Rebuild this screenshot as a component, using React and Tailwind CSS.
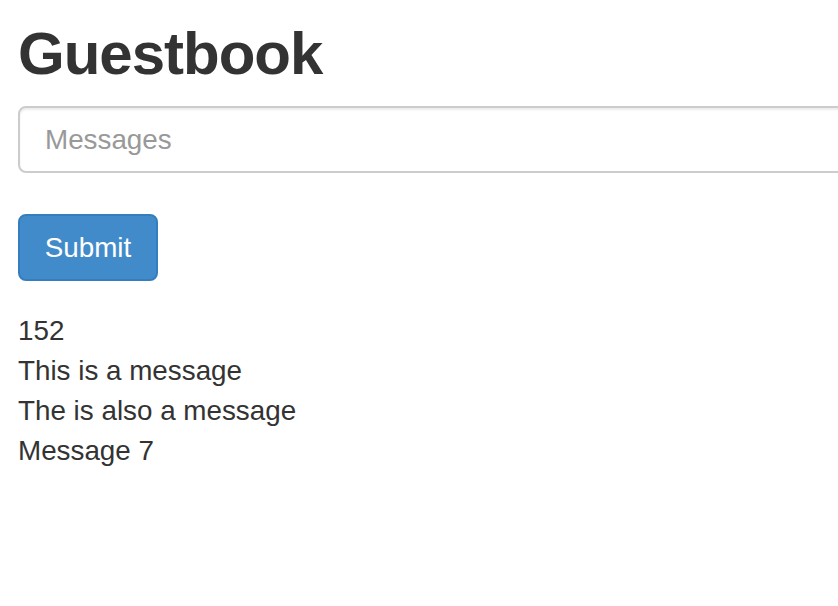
import React, { useState } from "react";

const App = () => {
  const [message, setMessage] = useState("");
  const messages = ["152", "This is a message", "The is also a message", "Message 7"];

  return (
    <div className="w-full min-h-[606px] overflow-hidden bg-white text-[#333] font-['Liberation_Sans',Arial,sans-serif]">
      <div className="pl-[18px] pt-[24px]">
        <h1 className="text-[60px] leading-[60px] font-bold tracking-[-1px] text-[#333]">Guestbook</h1>

        {/* Message form */}
        <form className="mt-[22px]" onSubmit={(e) => e.preventDefault()}>
          <input
            type="text"
            value={message}
            onChange={(e) => setMessage(e.target.value)}
            placeholder="Messages"
            className="block w-[860px] h-[67px] px-[25px] text-[27.8px] border-2 border-[#ccc] rounded-[8px] shadow-[inset_0_2px_2px_rgba(0,0,0,0.075)] placeholder-[#999] outline-none"
          />
          <button
            type="submit"
            className="mt-[41px] w-[140px] h-[67px] flex items-center justify-center text-[27.8px] text-white bg-[#428bca] border-2 border-[#357ebd] rounded-[8px]"
          >
            Submit
          </button>
        </form>

        {/* Messages list */}
        <div className="mt-[30px] text-[27.8px] leading-[40px]">
          {messages.map((m, i) => (
            <div key={i}>{m}</div>
          ))}
        </div>
      </div>
    </div>
  );
};

export default App;
